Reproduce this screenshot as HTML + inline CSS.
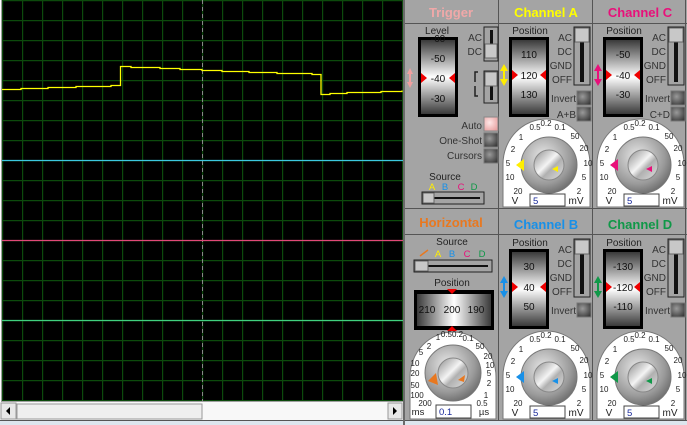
<!DOCTYPE html>
<html><head><style>
html,body{margin:0;padding:0;background:#a4a4a4;overflow:hidden}
svg{display:block}
text{font-family:"Liberation Sans",sans-serif}
.s{font-size:10px;fill:#222;text-anchor:middle}
.r{font-size:10px;fill:#333;text-anchor:end}
.d{font-size:10px;fill:#111;text-anchor:middle}
.k{font-size:8px;fill:#222;text-anchor:middle}
.u{font-size:10px;fill:#222;text-anchor:middle}
.t{font-size:13px;font-weight:bold;text-anchor:middle}
.in{font-size:9.5px;fill:#1a2a9a}
</style></head><body>
<svg width="687" height="425" viewBox="0 0 687 425" xmlns="http://www.w3.org/2000/svg">
<defs>
<linearGradient id="drum" x1="0" y1="0" x2="0" y2="1">
<stop offset="0" stop-color="#3a3a3a"/><stop offset="0.5" stop-color="#ffffff"/><stop offset="1" stop-color="#3a3a3a"/></linearGradient>
<linearGradient id="drumh" x1="0" y1="0" x2="1" y2="0">
<stop offset="0" stop-color="#3a3a3a"/><stop offset="0.5" stop-color="#ffffff"/><stop offset="1" stop-color="#3a3a3a"/></linearGradient>
<radialGradient id="ko" cx="0.4" cy="0.35" r="0.7"><stop offset="0" stop-color="#e8e8e8"/><stop offset="0.7" stop-color="#9a9a9a"/><stop offset="1" stop-color="#6a6a6a"/></radialGradient>
<linearGradient id="ki" x1="0" y1="0" x2="1" y2="1"><stop offset="0" stop-color="#8a8a8a"/><stop offset="0.45" stop-color="#f4f4f4"/><stop offset="0.6" stop-color="#b0b0b0"/><stop offset="1" stop-color="#e0e0e0"/></linearGradient>
<radialGradient id="btn" cx="0.4" cy="0.4" r="0.7"><stop offset="0" stop-color="#9a9a9a"/><stop offset="1" stop-color="#3a3a3a"/></radialGradient>
<radialGradient id="pbtn" cx="0.4" cy="0.4" r="0.7"><stop offset="0" stop-color="#ffe8e8"/><stop offset="1" stop-color="#e8a0a0"/></radialGradient>
<pattern id="grid" x="2" y="0" width="20" height="20" patternUnits="userSpaceOnUse">
<rect width="20" height="20" fill="#000"/><path d="M0 0.5H20M0.5 0V20" stroke="#0c4a0c" stroke-width="1.4"/></pattern>
</defs>

<rect x="0" y="0" width="403" height="425" fill="#fff"/>
<rect x="1" y="0" width="402" height="402" fill="#a0a0a0"/>
<rect x="2" y="0" width="401" height="401" fill="url(#grid)"/>
<line x1="202.5" y1="0" x2="202.5" y2="401" stroke="#888" stroke-dasharray="4,3"/>
<polyline fill="none" stroke="#ffff00" stroke-width="1.3" points="2,89.5 21,89.5 21,88.5 48,88.5 48,87.5 76,87.5 76,86.5 111,86.5 111,85.5 120.5,85.5 120.5,66.5 131,66.5 131,67.5 160,67.5 160,68.5 180,68.5 180,69.5 202,69.5 202,70.5 222,70.5 222,71.5 249,71.5 249,72.5 277,72.5 277,73.5 312,73.5 312,74.5 321,74.5 321,94.5 330,94.5 330,93.5 347,93.5 347,92.5 381,92.5 381,91.5 402,91.5 402,90.5"/>
<line x1="2" y1="160.5" x2="403" y2="160.5" stroke="#3cc8e0" stroke-width="1.2"/>
<line x1="2" y1="240.5" x2="403" y2="240.5" stroke="#e04878" stroke-width="1.2"/>
<line x1="2" y1="320.5" x2="403" y2="320.5" stroke="#40d080" stroke-width="1.2"/>
<rect x="0" y="402" width="403" height="18" fill="#f8f8f8"/>
<rect x="1" y="403" width="15" height="16" fill="#e8e8e8" stroke="#999"/>
<polygon points="6,411 10,407 10,415" fill="#000"/>
<rect x="17" y="404" width="185" height="15" fill="#efefef" stroke="#999"/>
<rect x="388" y="403" width="14" height="16" fill="#e8e8e8" stroke="#999"/>
<polygon points="397,411 393,407 393,415" fill="#000"/>
<rect x="0" y="420" width="403" height="5" fill="#dde6ee"/>
<line x1="0" y1="420.5" x2="403" y2="420.5" stroke="#555"/>

<rect x="403" y="0" width="284" height="425" fill="#a4a4a4"/>
<rect x="403" y="0" width="2" height="425" fill="#6a6a6a"/>
<line x1="498.5" y1="0" x2="498.5" y2="425" stroke="#555"/>
<line x1="592.5" y1="0" x2="592.5" y2="425" stroke="#555"/>
<line x1="685.5" y1="0" x2="685.5" y2="425" stroke="#555"/>
<line x1="405" y1="23.5" x2="687" y2="23.5" stroke="#555"/>
<line x1="405" y1="208.5" x2="687" y2="208.5" stroke="#555"/>
<line x1="405" y1="234.5" x2="687" y2="234.5" stroke="#555"/>
<line x1="405" y1="420.5" x2="687" y2="420.5" stroke="#555"/>
<rect x="405" y="421" width="282" height="4" fill="#dde6ee"/>

<text class="t" x="451" y="17" fill="#f0a8a8">Trigger</text>
<text class="t" x="546" y="17" fill="#ffff00">Channel A</text>
<text class="t" x="640" y="17" fill="#e8107a">Channel C</text>
<text class="t" x="451" y="227" fill="#e87820">Horizontal</text>
<text class="t" x="546" y="229" fill="#1890e8">Channel B</text>
<text class="t" x="640" y="229" fill="#109848">Channel D</text>

<!-- Trigger -->
<g transform="translate(406,24)">
<text class="s" x="31" y="10">Level</text>
<rect x="12" y="13" width="40" height="80" fill="#000"/>
<rect x="15" y="16" width="34" height="74" fill="url(#drum)"/>
<text class="d" x="32" y="18">-60</text>
<text class="d" x="32" y="38">-50</text>
<text class="d" x="32" y="58">-40</text>
<text class="d" x="32" y="78">-30</text>
<polygon points="15,49 21,54 15,59" fill="#e00"/><polygon points="49,49 43,54 49,59" fill="#e00"/>
<polygon points="4,44 1,50 7,50" fill="#f0a0a0"/><polygon points="4,64 1,58 7,58" fill="#f0a0a0"/><rect x="3" y="50" width="2" height="8" fill="#f0a0a0"/>
<text class="r" x="76" y="17">AC</text><text class="r" x="76" y="31">DC</text>
<rect x="78" y="3" width="14" height="34" fill="#a4a4a4" stroke="#222"/>
<rect x="84" y="6" width="3" height="28" fill="#111"/>
<rect x="79" y="20" width="12" height="14" fill="#c8c8c8" stroke="#666"/>
<path d="M72 48h-3v10M69 62v10h3" stroke="#222" fill="none" stroke-width="1.5"/>
<rect x="78" y="47" width="14" height="32" fill="#a4a4a4" stroke="#222"/>
<rect x="84" y="50" width="3" height="26" fill="#111"/>
<rect x="79" y="48" width="12" height="14" fill="#c8c8c8" stroke="#666"/>
<text class="r" x="76" y="105">Auto</text><rect x="78" y="93" width="14" height="14" fill="url(#pbtn)" stroke="#888"/>
<text class="r" x="76" y="120">One-Shot</text><rect x="78" y="109" width="14" height="14" fill="url(#btn)" stroke="#777"/>
<text class="r" x="76" y="135">Cursors</text><rect x="78" y="125" width="14" height="14" fill="url(#btn)" stroke="#777"/>
<text class="s" x="39" y="156">Source</text>
<text class="k" x="26" y="166" style="font-size:9.5px;fill:#ffee00">A</text>
<text class="k" x="39" y="166" style="font-size:9.5px;fill:#1890e8">B</text>
<text class="k" x="55" y="166" style="font-size:9.5px;fill:#e8107a">C</text>
<text class="k" x="68" y="166" style="font-size:9.5px;fill:#109848">D</text>
<rect x="16" y="168" width="62" height="12" fill="#a4a4a4" stroke="#222"/>
<rect x="28" y="173" width="46" height="2" fill="#111"/>
<rect x="17" y="169" width="11" height="10" fill="#c8c8c8" stroke="#666"/>
</g>

<!-- Horizontal -->
<g transform="translate(406,234)">
<text class="s" x="46" y="11">Source</text>
<path d="M14 22 L22 16" stroke="#e87820" stroke-width="1.5"/>
<text class="k" x="32" y="23" style="font-size:9.5px;fill:#ffee00">A</text>
<text class="k" x="46" y="23" style="font-size:9.5px;fill:#1890e8">B</text>
<text class="k" x="61" y="23" style="font-size:9.5px;fill:#e8107a">C</text>
<text class="k" x="76" y="23" style="font-size:9.5px;fill:#109848">D</text>
<rect x="8" y="26" width="78" height="12" fill="#a4a4a4" stroke="#222"/>
<rect x="20" y="31" width="62" height="2" fill="#111"/>
<rect x="9" y="27" width="13" height="10" fill="#c8c8c8" stroke="#666"/>
<text class="s" x="46" y="52">Position</text>
<rect x="8" y="56" width="80" height="40" fill="#000"/>
<rect x="11" y="60" width="74" height="32" fill="url(#drumh)"/>
<text class="d" x="21" y="79">210</text><text class="d" x="46" y="79">200</text><text class="d" x="70" y="79">190</text>
<polygon points="41,55 51,55 46,60" fill="#e00"/><polygon points="41,97 51,97 46,92" fill="#e00"/>
<path d="M4 185 V143 A43 45 0 0 1 90 143 V185 Z" fill="#fff" stroke="#777"/>
<rect x="30" y="171" width="35" height="13" fill="#fff" stroke="#444"/>
<text class="in" x="33" y="181">0.1</text>
<text class="k" x="32" y="106">1</text><text class="k" x="46" y="103">0.50.2</text><text class="k" x="62" y="107">0.1</text>
<text class="k" x="23" y="115">2</text><text class="k" x="15" y="121">5</text><text class="k" x="9" y="132">10</text>
<text class="k" x="9" y="142">20</text><text class="k" x="9" y="154">50</text><text class="k" x="11" y="164">100</text>
<text class="k" x="19" y="172">200</text>
<text class="k" x="74" y="115">50</text><text class="k" x="82" y="125">20</text><text class="k" x="84" y="134">10</text>
<text class="k" x="83" y="142">5</text><text class="k" x="83" y="152">2</text><text class="k" x="80" y="164">1</text><text class="k" x="76" y="172">0.5</text>
<text class="u" x="12" y="181" style="font-size:9.5px">ms</text><text class="u" x="78" y="181" style="font-size:9.5px">µs</text>
<circle cx="47" cy="139" r="28" fill="url(#ko)" stroke="#777"/>
<circle cx="47" cy="139" r="15" fill="url(#ki)" stroke="#888"/>
<polygon points="22,147 30,139 32,151" fill="#e87820"/><polygon points="52,146 59,141 58,148" fill="#e87820"/>
</g>

<!-- Channel A -->
<g transform="translate(500,24)">
<text class="s" x="30" y="10">Position</text>
<rect x="9" y="13" width="40" height="80" fill="#000"/>
<rect x="12" y="16" width="34" height="74" fill="url(#drum)"/>
<text class="d" x="29" y="34">110</text><text class="d" x="29" y="55">120</text><text class="d" x="29" y="74">130</text>
<polygon points="12,46 18,51 12,56" fill="#e00"/><polygon points="46,46 40,51 46,56" fill="#e00"/>
<polygon points="4,40 0,47 8,47" fill="#ffee00"/><polygon points="4,62 0,55 8,55" fill="#ffee00"/><rect x="3" y="47" width="2" height="8" fill="#ffee00"/>
<text class="r" x="72" y="17">AC</text><text class="r" x="72" y="31">DC</text><text class="r" x="72" y="45">GND</text><text class="r" x="72" y="59">OFF</text>
<rect x="74" y="3" width="16" height="58" fill="#a4a4a4" stroke="#222"/>
<rect x="80" y="8" width="4" height="50" fill="#111"/>
<rect x="75" y="4" width="14" height="14" fill="#c8c8c8" stroke="#666"/>
<text class="r" x="76" y="78">Invert</text><rect x="77" y="67" width="14" height="14" fill="url(#btn)" stroke="#777"/>
<text class="r" x="76" y="94">A+B</text><rect x="77" y="83" width="14" height="14" fill="url(#btn)" stroke="#777"/>
<path d="M3 183 V140 A43.5 45 0 0 1 90 140 V183 Z" fill="#fff" stroke="#777"/>
<rect x="30" y="170" width="35" height="12" fill="#fff" stroke="#444"/><text class="in" x="33" y="180">5</text>
<text class="k" x="35" y="106">0.5</text><text class="k" x="46" y="102">0.2</text><text class="k" x="60" y="106">0.1</text>
<text class="k" x="21" y="116">1</text><text class="k" x="13" y="128">2</text><text class="k" x="8" y="142">5</text>
<text class="k" x="10" y="156">10</text><text class="k" x="18" y="170">20</text>
<text class="k" x="75" y="115">50</text><text class="k" x="84" y="127">20</text><text class="k" x="88" y="142">10</text><text class="k" x="84" y="156">5</text><text class="k" x="79" y="170">2</text>
<text class="u" x="15" y="180">V</text><text class="u" x="76" y="180">mV</text>
<circle cx="49" cy="141" r="28" fill="url(#ko)" stroke="#777"/>
<circle cx="49" cy="141" r="15" fill="url(#ki)" stroke="#888"/>
<polygon points="16,141 24,135 24,147" fill="#ffee00"/><polygon points="52,145 58,142 58,148" fill="#ffee00"/>
</g>

<!-- Channel C -->
<g transform="translate(594,24)">
<text class="s" x="30" y="10">Position</text>
<rect x="9" y="13" width="40" height="80" fill="#000"/>
<rect x="12" y="16" width="34" height="74" fill="url(#drum)"/>
<text class="d" x="29" y="34">-50</text><text class="d" x="29" y="55">-40</text><text class="d" x="29" y="74">-30</text>
<polygon points="12,46 18,51 12,56" fill="#e00"/><polygon points="46,46 40,51 46,56" fill="#e00"/>
<polygon points="4,40 0,47 8,47" fill="#e8107a"/><polygon points="4,62 0,55 8,55" fill="#e8107a"/><rect x="3" y="47" width="2" height="8" fill="#e8107a"/>
<text class="r" x="72" y="17">AC</text><text class="r" x="72" y="31">DC</text><text class="r" x="72" y="45">GND</text><text class="r" x="72" y="59">OFF</text>
<rect x="74" y="3" width="16" height="58" fill="#a4a4a4" stroke="#222"/>
<rect x="80" y="8" width="4" height="50" fill="#111"/>
<rect x="75" y="4" width="14" height="14" fill="#c8c8c8" stroke="#666"/>
<text class="r" x="76" y="78">Invert</text><rect x="77" y="67" width="14" height="14" fill="url(#btn)" stroke="#777"/>
<text class="r" x="76" y="94">C+D</text><rect x="77" y="83" width="14" height="14" fill="url(#btn)" stroke="#777"/>
<path d="M3 183 V140 A43.5 45 0 0 1 90 140 V183 Z" fill="#fff" stroke="#777"/>
<rect x="30" y="170" width="35" height="12" fill="#fff" stroke="#444"/><text class="in" x="33" y="180">5</text>
<text class="k" x="35" y="106">0.5</text><text class="k" x="46" y="102">0.2</text><text class="k" x="60" y="106">0.1</text>
<text class="k" x="21" y="116">1</text><text class="k" x="13" y="128">2</text><text class="k" x="8" y="142">5</text>
<text class="k" x="10" y="156">10</text><text class="k" x="18" y="170">20</text>
<text class="k" x="75" y="115">50</text><text class="k" x="84" y="127">20</text><text class="k" x="88" y="142">10</text><text class="k" x="84" y="156">5</text><text class="k" x="79" y="170">2</text>
<text class="u" x="15" y="180">V</text><text class="u" x="76" y="180">mV</text>
<circle cx="49" cy="141" r="28" fill="url(#ko)" stroke="#777"/>
<circle cx="49" cy="141" r="15" fill="url(#ki)" stroke="#888"/>
<polygon points="16,141 24,135 24,147" fill="#e8107a"/><polygon points="52,145 58,142 58,148" fill="#e8107a"/>
</g>

<!-- Channel B -->
<g transform="translate(500,236)">
<text class="s" x="30" y="10">Position</text>
<rect x="9" y="13" width="40" height="80" fill="#000"/>
<rect x="12" y="16" width="34" height="74" fill="url(#drum)"/>
<text class="d" x="29" y="34">30</text><text class="d" x="29" y="55">40</text><text class="d" x="29" y="74">50</text>
<polygon points="12,46 18,51 12,56" fill="#e00"/><polygon points="46,46 40,51 46,56" fill="#e00"/>
<polygon points="4,40 0,47 8,47" fill="#1890e8"/><polygon points="4,62 0,55 8,55" fill="#1890e8"/><rect x="3" y="47" width="2" height="8" fill="#1890e8"/>
<text class="r" x="72" y="17">AC</text><text class="r" x="72" y="31">DC</text><text class="r" x="72" y="45">GND</text><text class="r" x="72" y="59">OFF</text>
<rect x="74" y="3" width="16" height="58" fill="#a4a4a4" stroke="#222"/>
<rect x="80" y="8" width="4" height="50" fill="#111"/>
<rect x="75" y="4" width="14" height="14" fill="#c8c8c8" stroke="#666"/>
<text class="r" x="76" y="78">Invert</text><rect x="77" y="67" width="14" height="14" fill="url(#btn)" stroke="#777"/>
<path d="M3 183 V140 A43.5 45 0 0 1 90 140 V183 Z" fill="#fff" stroke="#777"/>
<rect x="30" y="170" width="35" height="12" fill="#fff" stroke="#444"/><text class="in" x="33" y="180">5</text>
<text class="k" x="35" y="106">0.5</text><text class="k" x="46" y="102">0.2</text><text class="k" x="60" y="106">0.1</text>
<text class="k" x="21" y="116">1</text><text class="k" x="13" y="128">2</text><text class="k" x="8" y="142">5</text>
<text class="k" x="10" y="156">10</text><text class="k" x="18" y="170">20</text>
<text class="k" x="75" y="115">50</text><text class="k" x="84" y="127">20</text><text class="k" x="88" y="142">10</text><text class="k" x="84" y="156">5</text><text class="k" x="79" y="170">2</text>
<text class="u" x="15" y="180">V</text><text class="u" x="76" y="180">mV</text>
<circle cx="49" cy="141" r="28" fill="url(#ko)" stroke="#777"/>
<circle cx="49" cy="141" r="15" fill="url(#ki)" stroke="#888"/>
<polygon points="16,141 24,135 24,147" fill="#1890e8"/><polygon points="52,145 58,142 58,148" fill="#1890e8"/>
</g>

<!-- Channel D -->
<g transform="translate(594,236)">
<text class="s" x="30" y="10">Position</text>
<rect x="9" y="13" width="40" height="80" fill="#000"/>
<rect x="12" y="16" width="34" height="74" fill="url(#drum)"/>
<text class="d" x="29" y="34">-130</text><text class="d" x="29" y="55">-120</text><text class="d" x="29" y="74">-110</text>
<polygon points="12,46 18,51 12,56" fill="#e00"/><polygon points="46,46 40,51 46,56" fill="#e00"/>
<polygon points="4,40 0,47 8,47" fill="#109848"/><polygon points="4,62 0,55 8,55" fill="#109848"/><rect x="3" y="47" width="2" height="8" fill="#109848"/>
<text class="r" x="72" y="17">AC</text><text class="r" x="72" y="31">DC</text><text class="r" x="72" y="45">GND</text><text class="r" x="72" y="59">OFF</text>
<rect x="74" y="3" width="16" height="58" fill="#a4a4a4" stroke="#222"/>
<rect x="80" y="8" width="4" height="50" fill="#111"/>
<rect x="75" y="4" width="14" height="14" fill="#c8c8c8" stroke="#666"/>
<text class="r" x="76" y="78">Invert</text><rect x="77" y="67" width="14" height="14" fill="url(#btn)" stroke="#777"/>
<path d="M3 183 V140 A43.5 45 0 0 1 90 140 V183 Z" fill="#fff" stroke="#777"/>
<rect x="30" y="170" width="35" height="12" fill="#fff" stroke="#444"/><text class="in" x="33" y="180">5</text>
<text class="k" x="35" y="106">0.5</text><text class="k" x="46" y="102">0.2</text><text class="k" x="60" y="106">0.1</text>
<text class="k" x="21" y="116">1</text><text class="k" x="13" y="128">2</text><text class="k" x="8" y="142">5</text>
<text class="k" x="10" y="156">10</text><text class="k" x="18" y="170">20</text>
<text class="k" x="75" y="115">50</text><text class="k" x="84" y="127">20</text><text class="k" x="88" y="142">10</text><text class="k" x="84" y="156">5</text><text class="k" x="79" y="170">2</text>
<text class="u" x="15" y="180">V</text><text class="u" x="76" y="180">mV</text>
<circle cx="49" cy="141" r="28" fill="url(#ko)" stroke="#777"/>
<circle cx="49" cy="141" r="15" fill="url(#ki)" stroke="#888"/>
<polygon points="16,141 24,135 24,147" fill="#109848"/><polygon points="52,145 58,142 58,148" fill="#109848"/>
</g>
</svg>
</body></html>
